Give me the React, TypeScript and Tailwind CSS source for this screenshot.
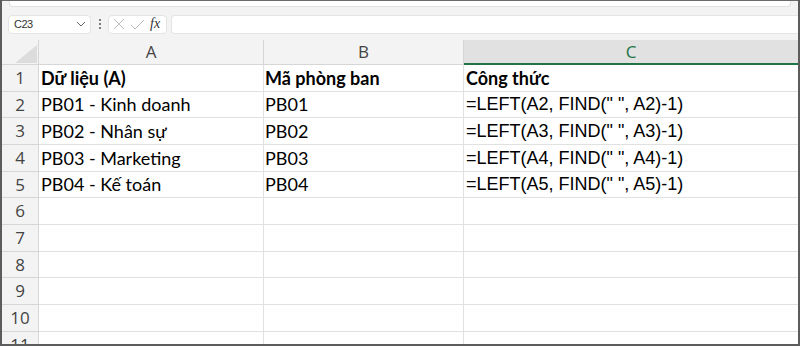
import React from 'react';

const rows = [
  { a: 'Dữ liệu (A)', b: 'Mã phòng ban', c: 'Công thức', bold: true },
  { a: 'PB01 - Kinh doanh', b: 'PB01', c: '=LEFT(A2, FIND(" ", A2)-1)' },
  { a: 'PB02 - Nhân sự', b: 'PB02', c: '=LEFT(A3, FIND(" ", A3)-1)' },
  { a: 'PB03 - Marketing', b: 'PB03', c: '=LEFT(A4, FIND(" ", A4)-1)' },
  { a: 'PB04 - Kế toán', b: 'PB04', c: '=LEFT(A5, FIND(" ", A5)-1)' },
  { a: '', b: '', c: '' },
  { a: '', b: '', c: '' },
  { a: '', b: '', c: '' },
  { a: '', b: '', c: '' },
  { a: '', b: '', c: '' },
  { a: '', b: '', c: '' },
];

// row heights alternate a bit like Excel's 20pt rows at this zoom
const heights = ['h-[27px]', 'h-[26px]', 'h-[27px]', 'h-[27px]', 'h-[26px]', 'h-[27px]', 'h-[27px]', 'h-[26px]', 'h-[27px]', 'h-[27px]', 'h-[27px]'];

const RibbonEdge = () => (
  <div className="h-[8px] bg-[#f3f3f3] border-t border-[#6a6a6a] overflow-hidden">
    <div className="mx-[7px] h-[6px] bg-white rounded-b-[4px] border-b border-x border-[#e2e2e2]" />
  </div>
);

const FormulaBar = () => (
  <div className="h-[32px] bg-[#f3f3f3] flex items-center pl-[6px]">
    <div className="w-[83px] h-[19px] bg-white rounded-[4px] border border-[#e4e4e4] flex items-center justify-between pl-[5px] pr-[4px]">
      <span className="text-[11px] text-[#333] font-['Liberation_Sans',sans-serif] tracking-[-0.5px]">C23</span>
      <svg width="10" height="6" viewBox="0 0 10 6">
        <path d="M1 1 L5 5 L9 1" fill="none" stroke="#666" strokeWidth="1" />
      </svg>
    </div>
    <div className="w-[17px] flex flex-col items-center gap-[2px]">
      <span className="w-[2px] h-[2px] bg-[#555] rounded-full" />
      <span className="w-[2px] h-[2px] bg-[#555] rounded-full" />
      <span className="w-[2px] h-[2px] bg-[#555] rounded-full" />
    </div>
    <div className="w-[59px] h-[19px] bg-white rounded-[4px] border border-[#e4e4e4] flex items-center pl-[4px] gap-[5px]">
      <svg width="12" height="12" viewBox="0 0 12 12">
        <path d="M1 1 L11 11 M11 1 L1 11" stroke="#bdbdbd" strokeWidth="1" />
      </svg>
      <svg width="15" height="11" viewBox="0 0 15 11">
        <path d="M1 6 L5 10 L14 1" fill="none" stroke="#bdbdbd" strokeWidth="1" />
      </svg>
      <span className="text-[14px] italic text-[#333] font-['Liberation_Serif',serif] leading-none -mt-[1px]">fx</span>
    </div>
    <div className="flex-1 ml-[4px] h-[19px] bg-white rounded-l-[4px] border border-r-0 border-[#e4e4e4]" />
  </div>
);

export default function App() {
  return (
    <div className="w-[800px] h-[346px] overflow-hidden bg-white border-x-2 border-b-2 border-[#5c5c5c] flex flex-col">
      <RibbonEdge />
      <FormulaBar />
      <div className="flex-1 overflow-hidden">
        <div className="grid grid-cols-[37px_225px_200px_1fr]">
          {/* column headers */}
          <div className="h-[25px] bg-[#f3f3f3] border-r border-b border-[#d6d6d6] flex items-end justify-end pr-[1px] pb-[1px]">
            <svg width="22" height="18" viewBox="0 0 22 18">
              <path d="M22 0 L22 18 L0 18 Z" fill="#dcdcdc" />
            </svg>
          </div>
          {['A', 'B'].map(l => (
            <div
              key={l}
              className="h-[25px] bg-[#f3f3f3] border-r border-b border-[#d6d6d6] flex items-center justify-center text-[17px] text-[#444] font-['Open_Sans',sans-serif]"
            >
              {l}
            </div>
          ))}
          <div className="h-[25px] bg-[#e1e1e1] border-b-2 border-[#217346] flex items-center justify-center text-[17px] text-[#217346] font-['Open_Sans',sans-serif]">
            C
          </div>

          {rows.map((r, i) => (
            <React.Fragment key={i}>
              <div
                className={`${heights[i]} bg-[#f3f3f3] border-r border-b border-[#d6d6d6] flex items-center justify-center text-[17px] text-[#444] font-['Open_Sans',sans-serif]`}
              >
                {i + 1}
              </div>
              <div
                className={`${heights[i]} border-r border-b border-[#e1e1e1] flex items-center pl-[2px] text-[18px] text-black font-['Lato',sans-serif] whitespace-nowrap ${r.bold ? 'font-bold' : ''}`}
              >
                {r.a}
              </div>
              <div
                className={`${heights[i]} border-r border-b border-[#e1e1e1] flex items-center pl-[1px] text-[18px] text-black font-['Lato',sans-serif] whitespace-nowrap ${r.bold ? 'font-bold' : ''}`}
              >
                {r.b}
              </div>
              <div
                className={`${heights[i]} border-b border-[#e1e1e1] flex items-center pl-[2px] text-black whitespace-nowrap ${
                  r.bold ? "font-bold text-[18px] font-['Lato',sans-serif]" : "text-[18px] font-['Liberation_Sans',sans-serif]"
                }`}
              >
                {r.c}
              </div>
            </React.Fragment>
          ))}
        </div>
      </div>
    </div>
  );
}
